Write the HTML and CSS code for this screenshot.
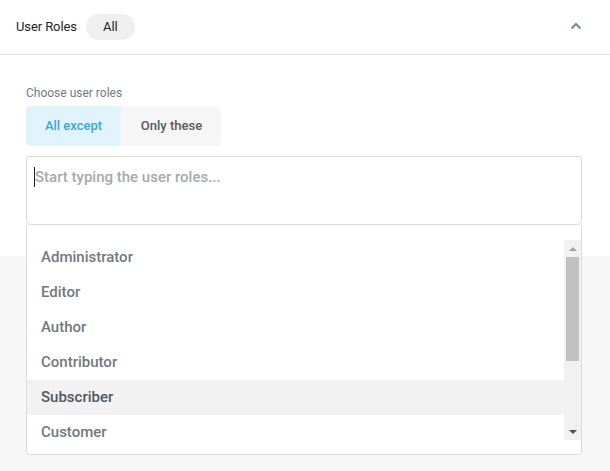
FILE: index.html
```html
<!DOCTYPE html>
<html>
<head>
<meta charset="utf-8">
<link rel="stylesheet" href="styles.css">
</head>
<body>
<div class="page">
<div class="panel">
  <div class="header">
    <span class="title">User Roles</span>
    <span class="pill">All</span>
    <span class="spacer"></span>
    <svg class="chevron" width="12" height="8" viewBox="0 0 12 8"><path d="M1.5 6.5 L6 2 L10.5 6.5" fill="none" stroke="#6f87a4" stroke-width="2"/></svg>
  </div>
  <div class="content">
    <div class="label">Choose user roles</div>
    <div class="toggle">
      <div class="opt active">All except</div>
      <div class="opt">Only these</div>
    </div>
    <div class="field">
      <div class="input"><span class="caret"></span><span class="placeholder">Start typing the user roles...</span></div>
      <div class="dropdown">
        <div class="scroller">
          <ul class="list">
            <li>Administrator</li>
            <li>Editor</li>
            <li>Author</li>
            <li>Contributor</li>
            <li class="hover">Subscriber</li>
            <li>Customer</li>
          </ul>
          <div class="scrollbar">
            <div class="arrow up"></div>
            <div class="track"><div class="thumb"></div></div>
            <div class="arrow down"></div>
          </div>
        </div>
      </div>
    </div>
  </div>
</div>
</div>
</body>
</html>
```
FILE: styles.css
```css
html, body {
  margin: 0;
  padding: 0;
  background: #f7f7f7;
  font-family: Roboto, "Noto Sans", sans-serif;
}
.page {
  min-height: 471px;
  background: #f7f7f7;
}
.panel {
  background: #fff;
  height: 256px;
}
.header {
  height: 54px;
  border-bottom: 1px solid #e4e4e4;
  display: flex;
  align-items: center;
  padding: 0 28px 0 16px;
}
.title {
  font-size: 13px;
  color: #1e1e1e;
  margin-top: -1px;
  letter-spacing: -0.1px;
}
.pill {
  margin-left: 9px;
  width: 49px;
  height: 26px;
  line-height: 26px;
  border-radius: 13px;
  background: #efefef;
  text-align: center;
  font-size: 13px;
  color: #1e1e1e;
  margin-top: -1px;
}
.spacer { flex: 1; }
.chevron { display: block; margin-top: -3px; }
.content {
  padding: 30px 28px 0 26px;
}
.label {
  font-size: 12px;
  line-height: 16px;
  color: #757a80;
}
.toggle {
  display: flex;
  margin-top: 5px;
  gap: 1px;
}
.opt {
  height: 40px;
  line-height: 40px;
  font-size: 13px;
  font-weight: 500;
  color: #555a60;
  background: #f6f6f6;
  text-align: center;
  width: 99px;
  border-radius: 0 4px 4px 0;
}
.opt.active {
  width: 95px;
  background: #e1f4fd;
  color: #3aa6e0;
  border-radius: 4px 0 0 4px;
}
.field {
  position: relative;
  margin-top: 10px;
}
.input {
  border: 1px solid #dcdcdc;
  border-radius: 4px;
  padding: 9px 0 0 7px;
  box-sizing: border-box;
  height: 69px;
  display: flex;
  align-items: flex-start;
}
.caret {
  width: 1px;
  height: 20px;
  background: #1e1e1e;
  margin-top: 1px;
}
.placeholder {
  font-size: 15px;
  font-weight: 500;
  line-height: 20px;
  color: #a6a9ad;
  margin-top: 1px;
}
.dropdown {
  position: absolute;
  left: 0;
  right: 0;
  top: 69px;
  background: #fff;
  border: 1px solid #dcdcdc;
  border-top: none;
  border-radius: 0 0 4px 4px;
  padding: 15px 0 14px 0;
  z-index: 2;
}
.scroller {
  display: flex;
  height: 200px;
  overflow: hidden;
}
.list {
  list-style: none;
  margin: 0;
  padding: 0;
  flex: 1;
}
.list li {
  height: 35px;
  line-height: 35px;
  padding-left: 14px;
  font-size: 15px;
  font-weight: 500;
  color: #73787e;
}
.list li.hover {
  background: #f2f2f2;
  color: #50575e;
}
.scrollbar {
  width: 17px;
  background: #f1f1f1;
  display: flex;
  flex-direction: column;
}
.arrow {
  height: 17px;
  display: flex;
  align-items: center;
  justify-content: center;
}
.arrow.up::before {
  content: "";
  border-left: 4px solid transparent;
  border-right: 4px solid transparent;
  border-bottom: 4px solid #a3a3a3;
}
.arrow.down::before {
  content: "";
  border-left: 4px solid transparent;
  border-right: 4px solid transparent;
  border-top: 4px solid #505050;
}
.track {
  flex: 1;
  padding: 0 2px;
}
.thumb {
  height: 104px;
  background: #c1c1c1;
}
```
